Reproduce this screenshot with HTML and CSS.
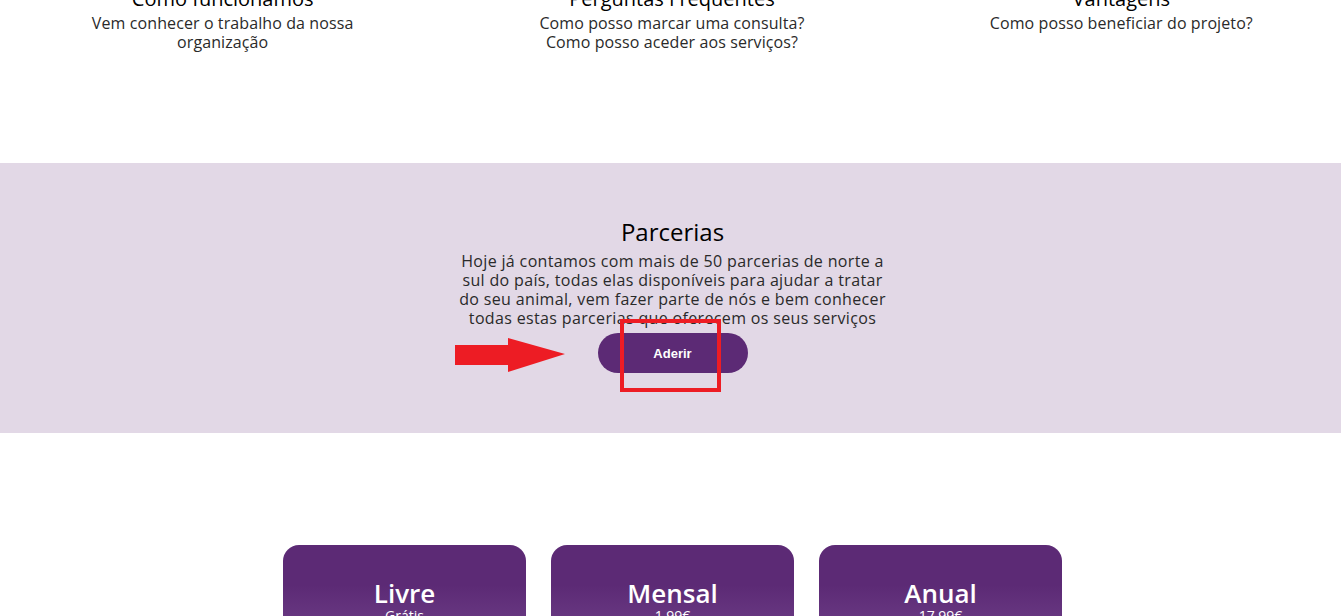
FILE: index.html
```html
<!DOCTYPE html>
<html lang="pt">
<head>
<meta charset="utf-8">
<title>Parcerias</title>
<link rel="stylesheet" href="styles.css">
</head>
<body>
<main class="page">
  <section class="features">
    <div class="feature">
      <h3 class="feature-title">Como funcionamos</h3>
      <p class="feature-text narrow">Vem conhecer o trabalho da nossa organização</p>
    </div>
    <div class="feature">
      <h3 class="feature-title">Perguntas Frequentes</h3>
      <p class="feature-text">Como posso marcar uma consulta?<br>Como posso aceder aos serviços?</p>
    </div>
    <div class="feature">
      <h3 class="feature-title">Vantagens</h3>
      <p class="feature-text">Como posso beneficiar do projeto?</p>
    </div>
  </section>

  <section class="partners">
    <h2 class="partners-title">Parcerias</h2>
    <p class="partners-text">Hoje já contamos com mais de 50 parcerias de norte a sul do país, todas elas disponíveis para ajudar a tratar do seu animal, vem fazer parte de nós e bem conhecer todas estas parcerias que oferecem os seus serviços</p>
    <a class="btn-join" href="#">Aderir</a>
    <svg class="annot-arrow" width="112" height="36" viewBox="0 0 112 36" aria-hidden="true">
      <polygon points="0,7 53,7 53,0 110,16 53,34 53,27 0,27" fill="#ed1c24"/>
    </svg>
    <div class="annot-box"></div>
  </section>

  <section class="plans">
    <div class="plan">
      <h3 class="plan-title">Livre</h3>
      <p class="plan-price">Grátis</p>
    </div>
    <div class="plan">
      <h3 class="plan-title">Mensal</h3>
      <p class="plan-price">1,99€</p>
    </div>
    <div class="plan">
      <h3 class="plan-title">Anual</h3>
      <p class="plan-price">17,99€</p>
    </div>
  </section>
</main>
</body>
</html>
```

FILE: styles.css
```css
* { box-sizing: border-box; }

html, body {
  margin: 0;
  padding: 0;
  background: #ffffff;
  overflow: hidden;
}

body {
  font-family: "Open Sans", "Liberation Sans", sans-serif;
  color: #222222;
}

.page {
  margin-top: -13px;
}

.features {
  display: grid;
  grid-template-columns: repeat(3, 1fr);
  width: 1348px;
  margin-left: -2px;
  height: 176px;
}

.feature {
  display: flex;
  flex-direction: column;
  align-items: center;
  text-align: center;
}

.feature-title {
  margin: 0;
  font-size: 20px;
  line-height: 24px;
  font-weight: 500;
  color: #000000;
}

.feature-text {
  margin: 3px 0 0;
  font-size: 16px;
  line-height: 19px;
  letter-spacing: 0.1px;
  color: #2a2a2a;
}

.feature-text.narrow {
  max-width: 275px;
}

.partners {
  position: relative;
  background: #e2d8e6;
  height: 270px;
  padding-top: 54px;
  padding-left: 4px;
  display: flex;
  flex-direction: column;
  align-items: center;
  text-align: center;
}

.partners-title {
  margin: 0;
  font-size: 24px;
  line-height: 30px;
  font-weight: 500;
  color: #000000;
}

.partners-text {
  margin: 5px 0 0;
  width: 442px;
  font-size: 16px;
  line-height: 19px;
  letter-spacing: 0.35px;
  color: #2a2a2a;
}

.btn-join {
  margin-top: 5px;
  width: 150px;
  height: 40px;
  border-radius: 20px;
  background: #5c2a75;
  color: #ffffff;
  font-family: "Liberation Sans", Arial, sans-serif;
  font-size: 13px;
  font-weight: 700;
  text-decoration: none;
  display: flex;
  align-items: center;
  justify-content: center;
}

.annot-arrow {
  position: absolute;
  left: 455px;
  top: 175px;
}

.annot-box {
  position: absolute;
  left: 620px;
  top: 156px;
  width: 101px;
  height: 73px;
  border: 4px solid #ed1c24;
}

.plans {
  display: flex;
  justify-content: center;
  gap: 25px;
  padding-top: 112px;
  padding-left: 4px;
}

.plan {
  width: 243px;
  height: 160px;
  border-radius: 16px;
  background: linear-gradient(180deg, #5c2a75 0%, #5c2a75 25%, #6e3f88 60%, #7a4d92 100%);
  color: #ffffff;
  text-align: center;
  padding-top: 33px;
}

.plan-title {
  margin: 0;
  font-size: 26px;
  line-height: 30px;
  font-weight: 600;
}

.plan-price {
  margin: 0;
  font-size: 14px;
  line-height: 16px;
}
```
